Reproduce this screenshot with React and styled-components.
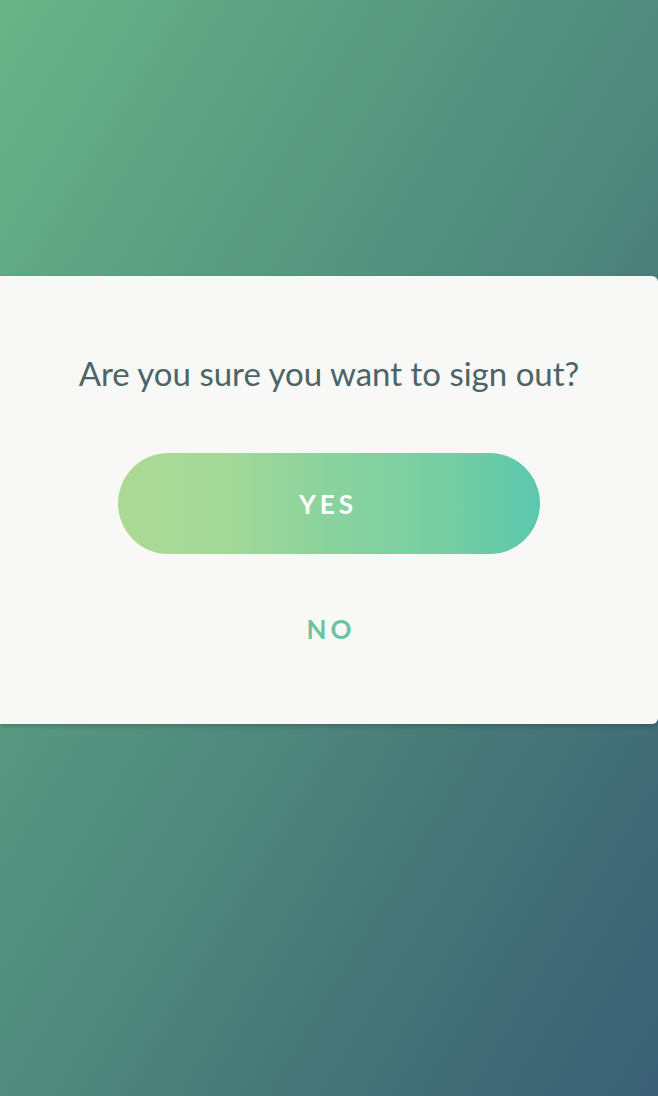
import styled, { createGlobalStyle } from "styled-components"

const Global = createGlobalStyle`
  html, body { margin: 0; padding: 0; }
  body {
    font-family: Lato, "Open Sans", sans-serif;
    background: linear-gradient(to bottom right, #69b488 0%, #5a9c82 28%, #508b7d 50%, #467677 72%, #3a5f75 100%);
    min-height: 1096px;
  }
`

const Screen = styled.div`
  height: 1096px;
  padding-top: 276px;
  box-sizing: border-box;
`

const Card = styled.div`
  background: #f8f9f6;
  border-radius: 0 6px 6px 0;
  box-shadow: 0 2px 4px rgba(0, 0, 0, 0.18);
  padding: 77px 0 79px;
  display: flex;
  flex-direction: column;
  align-items: center;
`

const Question = styled.p`
  margin: 0;
  font-size: 33px;
  line-height: 40px;
  color: #4d6466;
  font-weight: 400;
`

const YesButton = styled.button`
  margin-top: 60px;
  width: 422px;
  height: 101px;
  border: none;
  border-radius: 51px;
  background: linear-gradient(90deg, #acd996 0%, #a3d897 25%, #8ad39e 50%, #74cda3 80%, #5cc7af 100%);
  color: #ffffff;
  font-family: Lato, sans-serif;
  font-weight: 700;
  font-size: 26px;
  letter-spacing: 4px;
  padding-left: 4px;
  cursor: pointer;
`

const NoButton = styled.button`
  margin-top: 59px;
  border: none;
  background: none;
  color: #6dc3a1;
  font-family: Lato, sans-serif;
  font-weight: 700;
  font-size: 26px;
  line-height: 32px;
  letter-spacing: 4px;
  padding: 0 0 0 4px;
  cursor: pointer;
`

const App = () => {
  return (
    <Screen>
      <Global />
      <Card>
        <Question>Are you sure you want to sign out?</Question>
        <YesButton>YES</YesButton>
        <NoButton>NO</NoButton>
      </Card>
    </Screen>
  )
}

export default App
